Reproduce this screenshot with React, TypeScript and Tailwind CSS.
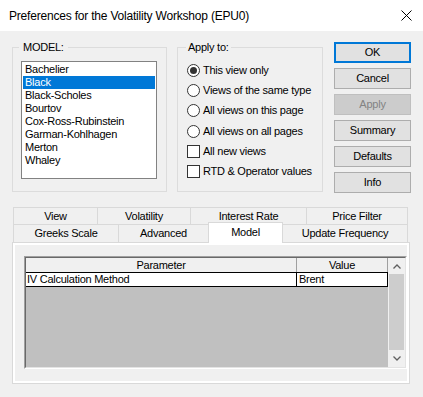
const models = [
  "Bachelier",
  "Black",
  "Black-Scholes",
  "Bourtov",
  "Cox-Ross-Rubinstein",
  "Garman-Kohlhagen",
  "Merton",
  "Whaley",
];

const applyOptions = [
  { label: "This view only", kind: "radio", checked: true },
  { label: "Views of the same type", kind: "radio", checked: false },
  { label: "All views on this page", kind: "radio", checked: false },
  { label: "All views on all pages", kind: "radio", checked: false },
  { label: "All new views", kind: "check", checked: false },
  { label: "RTD & Operator values", kind: "check", checked: false },
];

const buttons = [
  { label: "OK", primary: true },
  { label: "Cancel" },
  { label: "Apply", disabled: true },
  { label: "Summary" },
  { label: "Defaults" },
  { label: "Info" },
];

const topTabs = [
  { label: "View", w: "w-[84px]" },
  { label: "Volatility", w: "w-[93px]" },
  { label: "Interest Rate", w: "w-[116px]" },
  { label: "Price Filter", w: "w-[102px]", last: true },
];

function Chevron({ up }: { up?: boolean }) {
  return (
    <svg width="8" height="5" viewBox="0 0 8 5" className="block">
      <path
        d={up ? "M0.5 4.5 L4 1 L7.5 4.5" : "M0.5 0.5 L4 4 L7.5 0.5"}
        fill="none"
        stroke="#606060"
        strokeWidth="1.3"
      />
    </svg>
  );
}

export default function App() {
  return (
    <div className="h-[397px] w-[423px] overflow-hidden bg-[#f0f0f0] font-['Liberation_Sans',Arial,sans-serif] text-[11px] tracking-[-0.25px] text-black">
      {/* title bar */}
      <div className="flex h-[31px] items-center justify-between bg-white pl-[9px] pr-[11px]">
        <span className="pt-[1px] text-[12px] tracking-[-0.2px]">Preferences for the Volatility Workshop (EPU0)</span>
        <svg width="11" height="11" viewBox="0 0 11 11">
          <path d="M0.5 0.5 L10.5 10.5 M10.5 0.5 L0.5 10.5" stroke="#000" strokeWidth="1" />
        </svg>
      </div>

      <div className="flex pl-[12px] pt-[10px]">
        <fieldset className="m-0 h-[151px] w-[155px] min-w-0 border border-[#dcdcdc] p-0">
          <legend className="ml-[6px] px-[4px] leading-[12px]">MODEL:</legend>
          <div className="ml-[8px] mt-[8px] h-[118px] w-[136px] border border-[#828282] bg-white p-px">
            {models.map((m) => (
              <div
                key={m}
                className={`h-[13px] pl-[2px] leading-[13px] ${m === "Black" ? "bg-[#0078d7] text-white" : ""}`}
              >
                {m}
              </div>
            ))}
          </div>
        </fieldset>

        <fieldset className="m-0 ml-[10px] h-[151px] w-[146px] min-w-0 border border-[#dcdcdc] p-0">
          <legend className="ml-[8px] px-[2px] leading-[12px]">Apply to:</legend>
          <div className="mt-[7px] flex flex-col pl-[9px]">
            {applyOptions.map((o) => (
              <div key={o.label} className="flex h-[20.3px] items-center gap-[3px]">
                {o.kind === "radio" ? (
                  <span className="flex h-[13px] w-[13px] items-center justify-center rounded-full border border-[#333] bg-white">
                    {o.checked && <span className="h-[7px] w-[7px] rounded-full bg-[#333]" />}
                  </span>
                ) : (
                  <span className="h-[13px] w-[13px] border border-[#333] bg-white" />
                )}
                <span>{o.label}</span>
              </div>
            ))}
          </div>
        </fieldset>

        <div className="ml-[11px] mt-[1px] flex flex-col gap-[5px]">
          {buttons.map((b) => (
            <div
              key={b.label}
              className={`flex h-[21px] w-[77px] items-center justify-center ${
                b.primary
                  ? "border-2 border-[#0078d7] bg-[#e1e1e1]"
                  : b.disabled
                    ? "border border-[#bfbfbf] bg-[#cccccc] text-[#838383]"
                    : "border border-[#adadad] bg-[#e1e1e1]"
              }`}
            >
              {b.label}
            </div>
          ))}
        </div>
      </div>

      {/* tabs */}
      <div className="mt-[14px] pl-[12px]">
        <div className="ml-[1px] flex h-[17px]">
          {topTabs.map((t) => (
            <div
              key={t.label}
              className={`flex h-[17px] items-center justify-center border-l border-t border-[#d9d9d9] ${t.w} ${
                t.last ? "border-r" : ""
              }`}
            >
              {t.label}
            </div>
          ))}
        </div>
        <div className="ml-[1px] flex h-[18px]">
          <div className="flex h-[18px] w-[105px] items-center justify-center border-l border-t border-[#d9d9d9]">
            Greeks Scale
          </div>
          <div className="flex h-[18px] w-[90px] items-center justify-center border-l border-t border-[#d9d9d9]">
            Advanced
          </div>
          <div className="relative z-10 -mt-[2px] flex h-[21px] w-[75px] items-center justify-center border-x border-t border-[#d9d9d9] bg-white pb-[2px]">
            Model
          </div>
          <div className="flex h-[18px] w-[125px] items-center justify-center border-r border-t border-[#d9d9d9]">
            Update Frequency
          </div>
        </div>

        {/* panel */}
        <div className="flex h-[142px] w-[398px] flex-col border border-[#d9d9d9] bg-white p-[2px]">
          <div className="flex-1 bg-[#f0f0f0] pl-[9px] pt-[11px]">
            <div className="h-[113px] w-[383px] border border-b-white border-l-[#a0a0a0] border-r-white border-t-[#a0a0a0]">
              <div className="flex h-full border border-b-[#e3e3e3] border-l-[#696969] border-r-[#e3e3e3] border-t-[#696969]">
                <div className="flex w-[362px] flex-col bg-[#c0c0c0]">
                  <div className="flex h-[14px] bg-[#f0f0f0]">
                    <div className="flex w-[271px] items-center justify-center border-r border-[#a0a0a0]">
                      Parameter
                    </div>
                    <div className="flex w-[91px] items-center justify-center border-r border-[#a0a0a0]">Value</div>
                  </div>
                  <div className="flex h-[15px] border-y border-black bg-white">
                    <div className="flex w-[271px] items-center border-r border-black pl-px">IV Calculation Method</div>
                    <div className="flex w-[91px] items-center border-r border-black pl-[2px]">Brent</div>
                  </div>
                </div>
                <div className="flex w-[17px] flex-col bg-[#f0f0f0]">
                  <div className="flex h-[16px] items-center justify-center">
                    <Chevron up />
                  </div>
                  <div className="mx-[1px] h-[76px] bg-[#cdcdcd]" />
                  <div className="flex flex-1 items-center justify-center">
                    <Chevron />
                  </div>
                </div>
              </div>
            </div>
          </div>
        </div>
      </div>
    </div>
  );
}
